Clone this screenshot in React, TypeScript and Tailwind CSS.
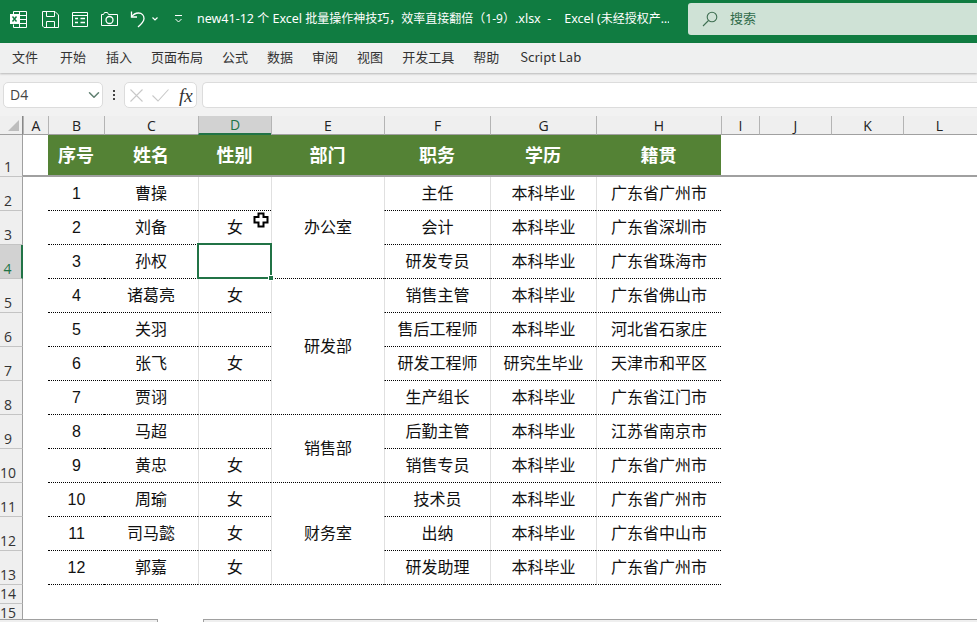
import { ChevronDown } from "lucide-react";

const columns = ["A", "B", "C", "D", "E", "F", "G", "H", "I", "J", "K", "L"];

const menus = [
  { label: "文件", cls: "mr-[3px]" },
  { label: "开始", cls: "mr-[1px]" },
  { label: "插入", cls: "" },
  { label: "页面布局", cls: "" },
  { label: "公式", cls: "" },
  { label: "数据", cls: "" },
  { label: "审阅", cls: "" },
  { label: "视图", cls: "" },
  { label: "开发工具", cls: "" },
  { label: "帮助", cls: "mr-[2px]" },
  { label: "Script Lab", cls: "" },
];

const people = [
  ["1", "曹操", "", "主任", "本科毕业", "广东省广州市"],
  ["2", "刘备", "女", "会计", "本科毕业", "广东省深圳市"],
  ["3", "孙权", "", "研发专员", "本科毕业", "广东省珠海市"],
  ["4", "诸葛亮", "女", "销售主管", "本科毕业", "广东省佛山市"],
  ["5", "关羽", "", "售后工程师", "本科毕业", "河北省石家庄"],
  ["6", "张飞", "女", "研发工程师", "研究生毕业", "天津市和平区"],
  ["7", "贾诩", "", "生产组长", "本科毕业", "广东省江门市"],
  ["8", "马超", "", "后勤主管", "本科毕业", "江苏省南京市"],
  ["9", "黄忠", "女", "销售专员", "本科毕业", "广东省广州市"],
  ["10", "周瑜", "女", "技术员", "本科毕业", "广东省广州市"],
  ["11", "司马懿", "女", "出纳", "本科毕业", "广东省中山市"],
  ["12", "郭嘉", "女", "研发助理", "本科毕业", "广东省广州市"],
];

// merged department cells, keyed by the index of their first row
const departments: Record<number, { name: string; span: string }> = {
  0: { name: "办公室", span: "row-span-3" },
  3: { name: "研发部", span: "row-span-4" },
  7: { name: "销售部", span: "row-span-2" },
  9: { name: "财务室", span: "row-span-3" },
};

const headers = ["序号", "姓名", "性别", "部门", "职务", "学历", "籍贯"];

const cellBase =
  "flex items-center justify-center border-b border-b-black [border-bottom-style:dotted] text-[16px]";
const cjkCell = cellBase + " pb-[4px]";
const gridLine = "border-l border-l-[#e0e0e0]";

function RowHead({ n, active }: { n: number; active?: boolean }) {
  return (
    <div
      className={[
        "flex items-end justify-center border-b border-b-[#c4c4c4] pr-[6px] text-[14px] leading-[19px]",
        active
          ? "border-r-2 border-r-[#217346] bg-[#d2d2d2] text-[#217346]"
          : "border-r border-r-[#a0a0a0] bg-[#efefef] text-[#333]",
      ].join(" ")}
      style={{ fontFamily: '"Open Sans", sans-serif' }}
    >
      {n}
    </div>
  );
}

function TitleIcons() {
  return (
    <div className="flex items-center">
      <svg width="17" height="17" viewBox="0 0 17 17" className="ml-[10px]" fill="none" stroke="white">
        <path d="M3.5 3.5V.5h13v16h-13v-3M9.5.5v16M9.5 4.5h7M9.5 8.5h7M9.5 12.5h7" />
        <rect x="0" y="3" width="9" height="10" fill="white" stroke="none" />
        <path d="M2.5 5.5l4 5M6.5 5.5l-4 5" stroke="#107c41" strokeWidth="1.4" />
      </svg>
      <svg width="17" height="17" viewBox="0 0 17 17" className="ml-[15px]" fill="none" stroke="white">
        <path d="M.5.5h12.5l3.5 3.5v12.500H2L.5 15z" />
        <path d="M4.500.5v5h8v-5M4.500 16.500v-6h8v6" />
      </svg>
      <svg width="16" height="15" viewBox="0 0 16 15" className="ml-[13px]" fill="none" stroke="white">
        <path d="M.5.5h15v14H.5zM.5 3.500h15" />
        <path d="M3 6.500h3M8.500 6.500h4.500M3 10.500h3M8.500 10.500h4.500" strokeWidth="1.500" />
      </svg>
      <svg width="17" height="14" viewBox="0 0 17 14" className="ml-[13px]" fill="none" stroke="white">
        <path d="M.5 2.500h2l1-2h3l1 2h9v11H.5z" />
        <circle cx="8.500" cy="8" r="3.500" strokeWidth="1.300" />
      </svg>
      <svg width="18" height="18" viewBox="0 0 18 18" className="ml-[12px]" fill="none" stroke="white" strokeWidth="1.300">
        <path d="M1.500 1.500v5.500h5.500" />
        <path d="M1.500 7c2-3 4-4 7-4 3.500 0 5.500 2.500 5.500 5.500 0 3-2.500 5.500-6 8.500" />
      </svg>
      <svg width="6" height="4" viewBox="0 0 6 4" className="ml-[4px]" fill="none" stroke="white" strokeWidth="1.200">
        <path d="M.5.5L3 3l2.500-2.500" />
      </svg>
      <svg width="7" height="8" viewBox="0 0 7 8" className="ml-[17px]" fill="none" stroke="white">
        <path d="M0 .5h7" />
        <path d="M.5 4L3.500 7l3-3" />
      </svg>
    </div>
  );
}

export default function App() {
  return (
    <div
      className="flex h-[622px] w-[977px] flex-col overflow-hidden bg-white text-[#111]"
      style={{ fontFamily: '"Noto Sans CJK SC", sans-serif' }}
    >
      {/* title bar */}
      <div className="flex h-[43px] shrink-0 items-start bg-[#107c41]">
        <div className="flex h-[38px] items-center">
          <TitleIcons />
          <span
            className="ml-[15px] w-[472px] overflow-hidden whitespace-pre text-[12px] text-white"
            style={{ fontFamily: '"Noto Sans", "Noto Sans CJK SC", sans-serif' }}
          >
            <span className="text-[12.5px]">new41-12 </span>个<span className="text-[12.5px]"> Excel </span>批量操作神技巧，效率直接翻倍（1-9）<span className="text-[12.5px]">.xlsx  -    Excel (</span>未经授权产…
          </span>
        </div>
        <div className="ml-[19px] mt-[3px] flex h-[32px] flex-1 items-center rounded-l-[3px] bg-[#cfe2d6]">
          <svg width="16" height="16" viewBox="0 0 16 16" className="ml-[14px]" fill="none" stroke="#3f6f52" strokeWidth="1.100">
            <circle cx="10" cy="6" r="4.800" />
            <path d="M6.500 9.500L1 15" />
          </svg>
          <span className="ml-[12px] pb-[2px] text-[13px] text-[#2f6b4a]">搜索</span>
        </div>
      </div>

      {/* menu */}
      <div className="relative z-10 flex h-[30px] shrink-0 items-center gap-[19px] bg-[#eff0f0] pb-[2px] pl-[12px] text-[13px] text-[#333] shadow-[0_1px_2px_rgba(0,0,0,0.25)]">
        {menus.map((m) => (
          <span key={m.label} className={m.cls}>
            {m.label}
          </span>
        ))}
      </div>

      {/* formula bar */}
      <div className="flex h-[43px] shrink-0 items-start bg-[#f2f2f2] pt-[9px]">
        <div className="ml-[3px] flex h-[26px] w-[100px] items-center justify-between rounded-[5px] border border-[#dcdcdc] bg-white pl-[6px] text-[14px] text-[#444]">
          <span className="pb-[1px]" style={{ fontFamily: '"Open Sans", sans-serif' }}>D4</span>
          <ChevronDown size={18} color="#5f7f70" className="mr-[-1px]" />
        </div>
        <div className="ml-[10px] mt-[8px] flex w-[2px] flex-col gap-[2px]">
          <div className="h-[2px] bg-[#444]" />
          <div className="h-[2px] bg-[#444]" />
          <div className="h-[2px] bg-[#444]" />
        </div>
        <div className="ml-[9px] flex h-[26px] w-[73px] items-center rounded-[5px] border border-[#dcdcdc] bg-white">
          <svg width="13" height="13" viewBox="0 0 13 13" className="ml-[5px]" fill="none" stroke="#c8c8c8" strokeWidth="1.100">
            <path d="M.5.5l12 12M12.500.5l-12 12" />
          </svg>
          <svg width="17" height="13" viewBox="0 0 17 13" className="ml-[9px]" fill="none" stroke="#c8c8c8" strokeWidth="1.100">
            <path d="M.5 6.500l5.500 5.500L16.500.5" />
          </svg>
          <span
            className="ml-[10px] text-[19px] italic leading-none text-[#333]"
            style={{ fontFamily: '"Liberation Serif", serif' }}
          >
            fx
          </span>
        </div>
        <div className="ml-[5px] h-[26px] flex-1 rounded-l-[5px] border border-r-0 border-[#dcdcdc] bg-white" />
      </div>

      {/* sheet */}
      <div className="grid h-[503px] shrink-0 grid-cols-[23px_25px_56px_94px_73px_113px_106px_106px_125px_38px_72px_72px_72px_1fr] grid-rows-[19px_42px_repeat(12,34px)_19px_19px] overflow-hidden">
        {/* column headers */}
        <div className="relative flex items-end justify-end border-b border-r border-b-[#a0a0a0] border-r-[#888] bg-[#efefef] pb-[3px] pr-[3px]">
          <div className="h-0 w-0 border-b-[11px] border-l-[11px] border-b-[#bdbdbd] border-l-transparent" />
        </div>
        {columns.map((c) => (
          <div
            key={c}
            className={[
              "flex items-center justify-center border-l border-l-[#b4b4b4] text-[14px]",
              c === "D"
                ? "border-b-2 border-b-[#217346] bg-[#d2d2d2] text-[#217346]"
                : "border-b border-b-[#a0a0a0] bg-[#efefef] text-[#222]",
            ].join(" ")}
            style={{ fontFamily: '"Open Sans", sans-serif' }}
          >
            {c}
          </div>
        ))}
        <div className="border-b border-b-[#a0a0a0] bg-[#efefef]" />

        {/* row 1 */}
        <RowHead n={1} />
        <div className="border-b-2 border-b-[#a0a0a0]" />
        {headers.map((h) => (
          <div
            key={h}
            className="flex items-center justify-center border-b-2 border-b-[#a0a0a0] bg-[#548235] pb-[2px] text-[18px] font-bold text-white"
          >
            {h}
          </div>
        ))}
        <div className="col-span-5 border-b-2 border-b-[#a0a0a0]" />

        {/* rows 2 to 13 */}
        {people.map((p, i) => {
          const dept = departments[i];
          return (
            <div key={p[0]} className="contents">
              <RowHead n={i + 2} active={i === 2} />
              <div />
              <div className={cellBase + " pl-[1px]"} style={{ fontFamily: '"Liberation Sans", sans-serif' }}>
                {p[0]}
              </div>
              <div className={cjkCell}>{p[1]}</div>
              <div className={"relative " + cjkCell + " " + gridLine}>
                {p[2]}
                {i === 1 && (
                  <svg width="16" height="16" viewBox="0 0 16 16" className="absolute left-[54px] top-[1px]">
                    <path
                      d="M5.500 1.500h5v3.500h4v5.500h-4v4h-5v-4h-4v-5.500h4z"
                      fill="white"
                      stroke="black"
                      strokeWidth="2"
                    />
                  </svg>
                )}
                {i === 2 && (
                  <div className="absolute left-[-2px] top-[-2px] h-[36px] w-[75px] border-2 border-[#217346]">
                    <div className="absolute bottom-[-4px] right-[-4px] h-[6px] w-[6px] border border-white bg-[#217346]" />
                  </div>
                )}
              </div>
              {dept && <div className={dept.span + " " + cjkCell + " " + gridLine}>{dept.name}</div>}
              <div className={cjkCell + " " + gridLine}>{p[3]}</div>
              <div className={cjkCell + " " + gridLine}>{p[4]}</div>
              <div className={cjkCell + " " + gridLine}>{p[5]}</div>
              <div className="col-span-5" />
            </div>
          );
        })}

        {/* rows 14, 15 */}
        <RowHead n={14} />
        <div className="col-span-13" />
        <RowHead n={15} />
        <div className="col-span-13" />
      </div>

      {/* sheet tabs / scrollbar strip */}
      <div className="flex flex-1">
        <div className="w-[158px] border-r border-t border-[#a0a0a0] bg-[#efefef]" />
        <div className="w-[45px]" />
        <div className="flex-1 border-l border-t border-[#a0a0a0] bg-[#efefef]" />
      </div>
    </div>
  );
}
